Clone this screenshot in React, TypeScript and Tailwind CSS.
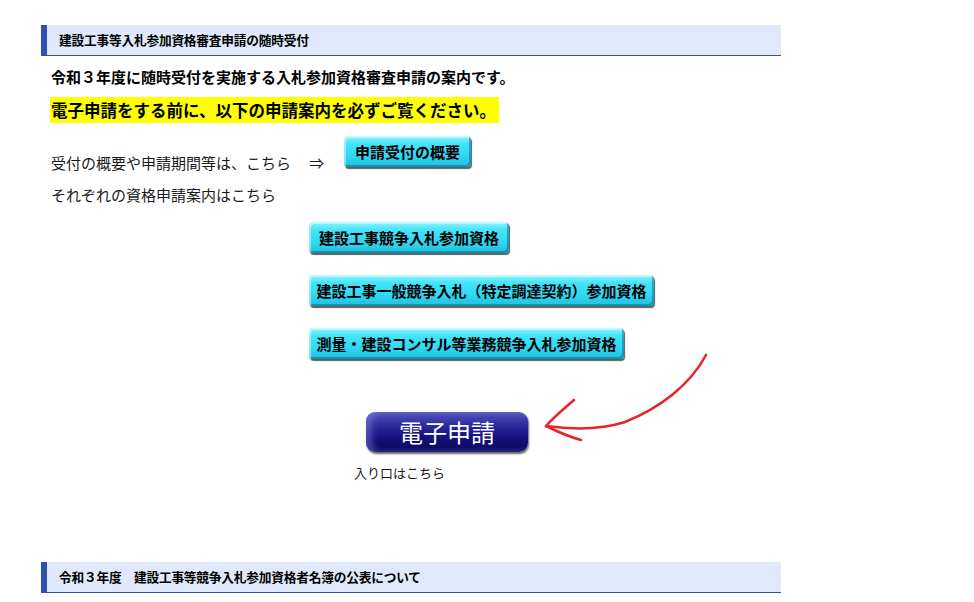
import React from "react";

const font = { fontFamily: '"Noto Sans CJK JP", "Noto Sans", sans-serif' };

function Bar({ children }: { children: React.ReactNode }) {
  return (
    <div className="h-[31px] w-[740px] border-l-[6px] border-b border-[#2d52ad] bg-[#dfe9fb] pl-[12px] flex items-center text-[12.7px] font-bold text-black tracking-[-0.2px]">
      {children}
    </div>
  );
}

function CyanButton({ children, w }: { children: React.ReactNode; w: string }) {
  return (
    <div
      className={`${w} h-[31px] rounded-[4px] flex items-center justify-center text-[15px] font-bold text-black leading-none bg-[linear-gradient(to_bottom,#93f5ff_0%,#45e3f8_25%,#2fd8f2_65%,#1fbfdf_100%)] shadow-[inset_2px_2px_0_rgba(255,255,255,0.45),inset_-2px_-2px_0_rgba(0,90,120,0.45),1px_2px_1px_rgba(40,40,40,0.75)]`}
    >
      {children}
    </div>
  );
}

export default function App() {
  return (
    <div className="relative w-[974px] h-[602px] bg-white overflow-hidden" style={font}>
      <div className="pt-[25px] pl-[41px]">
        <Bar>建設工事等入札参加資格審査申請の随時受付</Bar>

        <p className="mt-[10px] pl-[10px] text-[15px] leading-[22px] font-bold text-black">
          令和３年度に随時受付を実施する入札参加資格審査申請の案内です。
        </p>

        <div className="mt-[9px] pl-[9px]">
          <span className="inline-block h-[26px] w-[449px] bg-[#ffff00] pl-[1px] text-[16.5px] leading-[26px] font-bold text-black">
            電子申請をする前に、以下の申請案内を必ずご覧ください。
          </span>
        </div>

        <div className="mt-[13px] flex items-start">
          <div className="w-[303px] pl-[10px] mt-[16px] text-[15px] leading-[22px] text-[#1a1a1a] whitespace-pre">
            受付の概要や申請期間等は、こちら　 ⇒
          </div>
          <CyanButton w="w-[127px]">申請受付の概要</CyanButton>
        </div>

        <p className="mt-[10px] pl-[10px] text-[15px] leading-[22px] text-[#1a1a1a]">
          それぞれの資格申請案内はこちら
        </p>

        <div className="mt-[16px] ml-[268px] flex flex-col gap-[22px]">
          <CyanButton w="w-[200px]">建設工事競争入札参加資格</CyanButton>
          <CyanButton w="w-[345px]">建設工事一般競争入札（特定調達契約）参加資格</CyanButton>
          <CyanButton w="w-[315px]">測量・建設コンサル等業務競争入札参加資格</CyanButton>
        </div>

        <div className="mt-[53px] ml-[325px] w-[162px] h-[40px] rounded-[9px] flex items-center justify-center text-white text-[24px] leading-none tracking-[0px] bg-[linear-gradient(to_bottom,#5454bc_0%,#2a2a9c_35%,#141482_60%,#08085a_100%)] shadow-[inset_6px_0_6px_rgba(140,140,230,0.45),1px_2px_2px_rgba(0,0,0,0.6)]">
          電子申請
        </div>

        <p className="mt-[12px] ml-[313px] text-[13px] leading-[18px] text-[#1a1a1a]">入り口はこちら</p>

        <div className="mt-[80px]">
          <Bar>令和３年度　建設工事等競争入札参加資格者名簿の公表について</Bar>
        </div>
      </div>

      <svg className="absolute left-0 top-0 pointer-events-none" width="974" height="602">
        <path
          d="M706 355 C690 385 660 408 625 422 C600 430 575 430 546 426"
          fill="none"
          stroke="#e8262a"
          strokeWidth="2.6"
          strokeLinecap="round"
        />
        <path
          d="M574 400 C565 408 555 416 546 426 C558 432 570 437 581 440"
          fill="none"
          stroke="#e8262a"
          strokeWidth="2.6"
          strokeLinecap="round"
          strokeLinejoin="round"
        />
      </svg>
    </div>
  );
}
